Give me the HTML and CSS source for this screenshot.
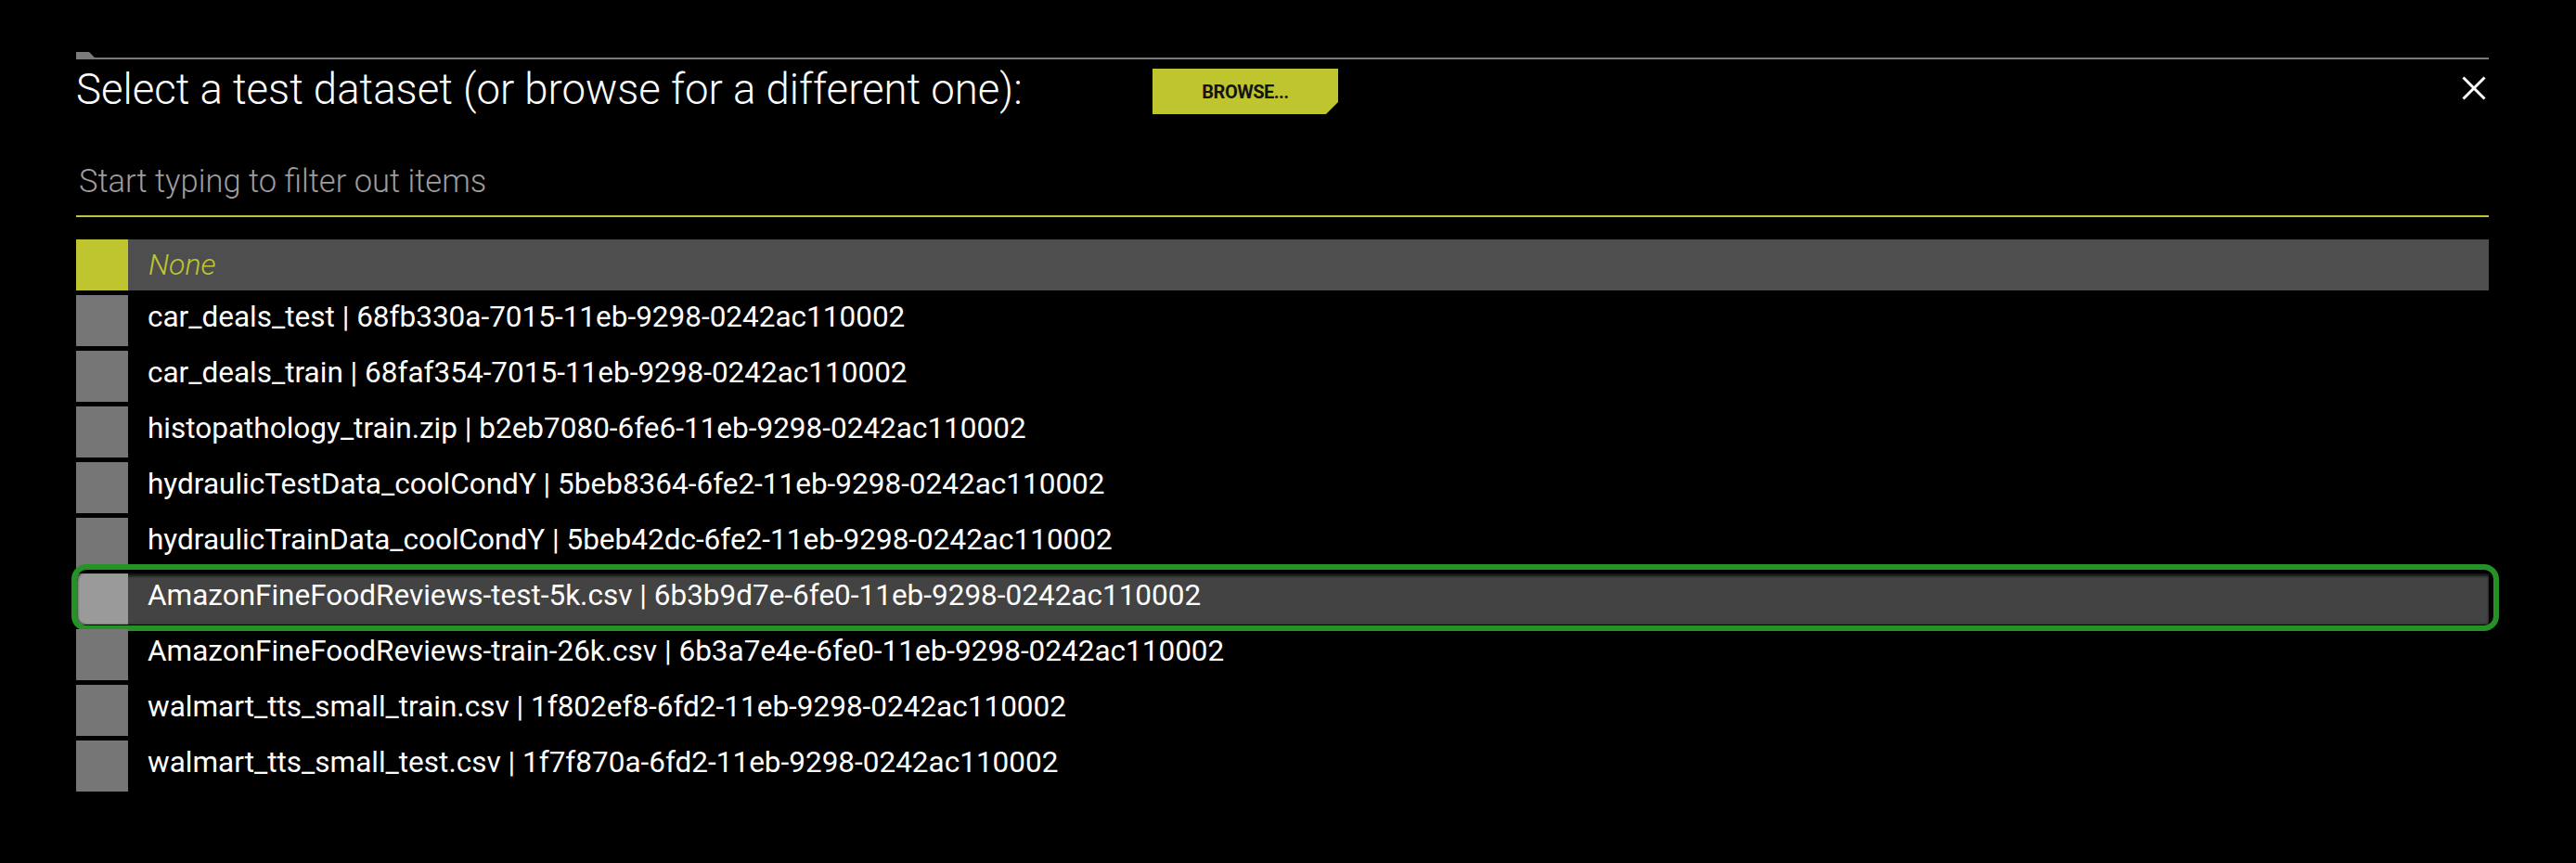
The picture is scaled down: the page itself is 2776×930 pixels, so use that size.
FILE: index.html
```html
<!DOCTYPE html>
<html lang="en">
<head>
<meta charset="utf-8">
<title>Select a test dataset</title>
<link rel="stylesheet" href="styles.css">
</head>
<body>
<div class="dialog">
  <div class="topbar">
    <div class="tab"></div>
    <div class="rule"></div>
  </div>
  <div class="header">
    <h1 class="title">Select a test dataset (or browse for a different one):</h1>
    <button class="browse" type="button">BROWSE...</button>
    <div class="spacer"></div>
    <button class="close" type="button" aria-label="Close">
      <svg width="26" height="26" viewBox="0 0 26 26"><path d="M1.5 1.5 L24.5 24.5 M24.5 1.5 L1.5 24.5" stroke="#fff" stroke-width="3" fill="none"/></svg>
    </button>
  </div>
  <div class="filter">
    <input class="filter-input" type="text" placeholder="Start typing to filter out items">
  </div>
  <ul class="list">
    <li class="row row-none"><span class="sq"></span><span class="label">None</span></li>
    <li class="row"><span class="sq"></span><span class="label">car_deals_test | 68fb330a-7015-11eb-9298-0242ac110002</span></li>
    <li class="row"><span class="sq"></span><span class="label">car_deals_train | 68faf354-7015-11eb-9298-0242ac110002</span></li>
    <li class="row"><span class="sq"></span><span class="label">histopathology_train.zip | b2eb7080-6fe6-11eb-9298-0242ac110002</span></li>
    <li class="row"><span class="sq"></span><span class="label">hydraulicTestData_coolCondY | 5beb8364-6fe2-11eb-9298-0242ac110002</span></li>
    <li class="row"><span class="sq"></span><span class="label">hydraulicTrainData_coolCondY | 5beb42dc-6fe2-11eb-9298-0242ac110002</span></li>
    <li class="row row-focus"><span class="sq"></span><span class="label">AmazonFineFoodReviews-test-5k.csv | 6b3b9d7e-6fe0-11eb-9298-0242ac110002</span></li>
    <li class="row"><span class="sq"></span><span class="label">AmazonFineFoodReviews-train-26k.csv | 6b3a7e4e-6fe0-11eb-9298-0242ac110002</span></li>
    <li class="row"><span class="sq"></span><span class="label">walmart_tts_small_train.csv | 1f802ef8-6fd2-11eb-9298-0242ac110002</span></li>
    <li class="row"><span class="sq"></span><span class="label">walmart_tts_small_test.csv | 1f7f870a-6fd2-11eb-9298-0242ac110002</span></li>
  </ul>
</div>
</body>
</html>
```

FILE: styles.css
```css
html, body {
  margin: 0;
  padding: 0;
  background: #000;
  color: #fff;
  font-family: Roboto, "Noto Sans", "Liberation Sans", sans-serif;
}

.dialog {
  width: 2600px;
  margin-left: 82px;
  padding-top: 56px;
}

.topbar {
  display: flex;
  flex-direction: column;
}

.tab {
  width: 20px;
  height: 6px;
  background: #7a7a7a;
  clip-path: polygon(0 0, 14px 0, 20px 100%, 0 100%);
}

.rule {
  height: 2px;
  background: #7a7a7a;
}

.header {
  display: flex;
  align-items: center;
  height: 49px;
  margin-top: 10px;
}

.title {
  width: 1160px;
  margin: 0;
  font-size: 45.5px;
  line-height: 49px;
  font-weight: 300;
  color: #fff;
  white-space: nowrap;
  position: relative;
  top: -2px;
}

.browse {
  width: 200px;
  height: 49px;
  border: 0;
  padding: 0;
  background: #bfc52f;
  color: #141414;
  font-family: Roboto, "Liberation Sans", sans-serif;
  font-weight: 700;
  font-size: 20px;
  letter-spacing: -0.5px;
  clip-path: polygon(0 0, 100% 0, 100% 36px, 187px 100%, 0 100%);
  cursor: pointer;
}

.spacer {
  flex: 1;
}

.close {
  width: 26px;
  height: 26px;
  border: 0;
  padding: 0;
  margin-right: 3px;
  background: transparent;
  display: flex;
  align-items: center;
  justify-content: center;
  position: relative;
  top: -4px;
  cursor: pointer;
}

.filter {
  margin-top: 52px;
}

.filter-input {
  display: block;
  width: 100%;
  box-sizing: border-box;
  background: transparent;
  border: 0;
  border-bottom: 2px solid #bfc43c;
  outline: none;
  padding: 0 0 17px 3px;
  font-family: Roboto, "Liberation Sans", sans-serif;
  font-size: 34.5px;
  line-height: 40px;
  font-weight: 300;
  color: #fff;
}

.filter-input::placeholder {
  color: #9d9d9d;
  opacity: 1;
}

.list {
  list-style: none;
  margin: 24px 0 0;
  padding: 0;
  display: flex;
  flex-direction: column;
  gap: 5px;
}

.row {
  display: flex;
  align-items: flex-start;
  height: 55px;
  position: relative;
}

.sq {
  flex: 0 0 56px;
  height: 55px;
  background: #767676;
}

.label {
  padding-left: 21px;
  font-size: 31.5px;
  line-height: 48px;
  font-weight: 400;
  color: #fff;
  white-space: nowrap;
}

.row-none {
  background: #4e4e4e;
}

.row-none .sq {
  background: #bfc52f;
}

.row-none .label {
  font-style: italic;
  font-weight: 300;
  color: #bfc52f;
  font-size: 32px;
  line-height: 55px;
  padding-left: 22px;
}

.row-focus {
  background: #434343;
  box-shadow: inset 0 3px 3px rgba(0, 0, 0, 0.7);
}

.row-focus .sq {
  background: #9a9a9a;
}

.row-focus::after {
  content: "";
  position: absolute;
  top: -10px;
  right: -11px;
  bottom: -7px;
  left: -5px;
  border: 6px solid #259126;
  border-radius: 16px;
  box-shadow: inset 0 2px 3px rgba(0, 0, 0, 0.8), inset 0 -1px 2px rgba(0, 0, 0, 0.6);
  pointer-events: none;
}
```
